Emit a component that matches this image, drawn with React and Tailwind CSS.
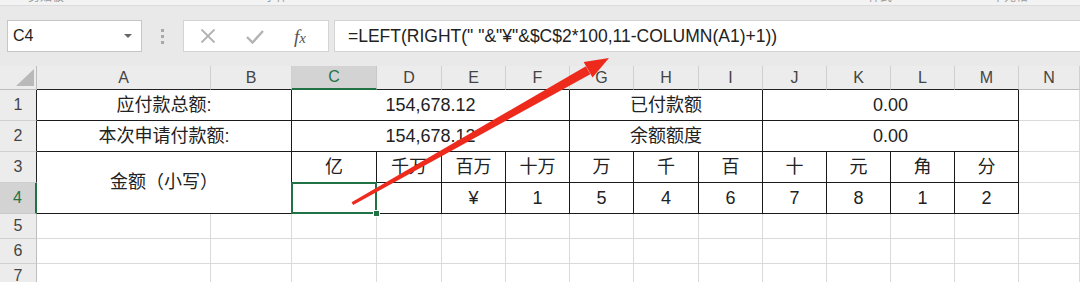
import React from "react";

const FONT = { fontFamily: '"Liberation Sans", "Noto Sans CJK SC", sans-serif' };

const cols = ["A", "B", "C", "D", "E", "F", "G", "H", "I", "J", "K", "L", "M", "N"];

function ColHeader({ c }) {
  if (c === "C") {
    return (
      <div className="flex items-center justify-center bg-[#d3d3d3] border-r border-[#c8c8c8] border-b-2 border-b-[#217346] text-[#217346] text-[16px]">
        C
      </div>
    );
  }
  const dark = c !== "N";
  return (
    <div
      className={
        "flex items-center justify-center bg-[#ececec] border-r border-[#d0d0d0] text-[#444] text-[16px] border-b " +
        (dark ? "border-b-[#222]" : "border-b-[#bdbdbd]")
      }
    >
      {c}
    </div>
  );
}

function RowHeader({ n, kind }) {
  if (kind === "sel") {
    return (
      <div className="flex items-center justify-center bg-[#d3d3d3] border-b border-[#c8c8c8] border-r-2 border-r-[#217346] text-[#217346] text-[16px]">
        {n}
      </div>
    );
  }
  return (
    <div
      className={
        "flex items-center justify-center bg-[#ececec] border-b border-[#d0d0d0] text-[#444] text-[16px] border-r " +
        (kind === "dark" ? "border-r-[#222]" : "border-r-[#bdbdbd]")
      }
    >
      {n}
    </div>
  );
}

function T({ children, className = "" }) {
  return (
    <div
      className={
        "flex items-center justify-center border-r border-b border-[#1a1a1a] text-[18px] text-[#222] " + className
      }
    >
      {children}
    </div>
  );
}

function G({ className = "" }) {
  return <div className={"border-r border-b border-[#dadada] bg-white " + className} />;
}

export default function App() {
  const labels = ["亿", "千万", "百万", "十万", "万", "千", "百", "十", "元", "角", "分"];
  const vals = ["", "", "¥", "1", "5", "4", "6", "7", "8", "1", "2"];
  return (
    <div className="relative w-[1080px] h-[282px] overflow-hidden bg-[#e9e9e9]" style={FONT}>
      {/* top ribbon remnant */}
      <div className="h-[6px] bg-[#f3f3f3] border-b border-[#dcdcdc] overflow-hidden relative">
        <div className="flex text-[12px] text-[#999] leading-none -mt-[9px]">
          <span className="ml-[28px]">剪贴板</span>
          <span className="ml-[200px]">字体</span>
          <span className="ml-[580px]">样式</span>
          <span className="ml-[100px]">单元格</span>
        </div>
      </div>
      {/* formula bar */}
      <div className="flex items-start pt-[14px] h-[60px] pl-[7px]">
        <div className="w-[135px] h-[32px] bg-white border border-[#c6c6c6] flex items-center justify-between px-[5px]">
          <span className="text-[16px] text-[#222]">C4</span>
          <svg width="8" height="5" viewBox="0 0 8 5" className="mr-[4px]">
            <path d="M0 0 L8 0 L4 4 Z" fill="#666" />
          </svg>
        </div>
        <div className="w-[41px] h-[32px] flex flex-col items-center justify-center gap-[3px]">
          <div className="w-[3px] h-[3px] bg-[#a8a8a8]" />
          <div className="w-[3px] h-[3px] bg-[#a8a8a8]" />
          <div className="w-[3px] h-[3px] bg-[#a8a8a8]" />
        </div>
        <div className="w-[146px] h-[32px] bg-white border border-[#d4d4d4] flex items-center">
          <svg width="16" height="16" viewBox="0 0 16 16" className="ml-[16px]">
            <path d="M1.5 1.5 L14.5 14.5 M14.5 1.5 L1.5 14.5" stroke="#b3b3b3" strokeWidth="1.8" />
          </svg>
          <svg width="18" height="15" viewBox="0 0 18 15" className="ml-[30px]">
            <path d="M1 8 L6.5 13.5 L17 2" stroke="#b3b3b3" strokeWidth="2.4" fill="none" />
          </svg>
          <span
            className="ml-[30px] text-[19px] italic text-[#555] leading-none"
            style={{ fontFamily: '"Liberation Serif", serif' }}
          >
            f<span className="text-[15px]">x</span>
          </span>
        </div>
        <div className="flex-1 h-[32px] bg-white border-y border-l border-[#d4d4d4] ml-[5px] flex items-center pl-[13px]">
          <span className="text-[17.5px] text-[#222] whitespace-pre">=LEFT(RIGHT(" "&"¥"&$C$2*100,11-COLUMN(A1)+1))</span>
        </div>
      </div>

      {/* grid */}
      <div className="grid grid-cols-[37px_174px_81px_85px_65px_64px_64px_64px_65px_64px_64px_64px_64px_64px_61px] grid-rows-[24px_31px_31px_31px_31px_25px_25px_25px] bg-white">
        {/* header row */}
        <div className="relative bg-[#ececec] border-r border-b border-[#bdbdbd]">
          <svg width="19" height="18" viewBox="0 0 19 18" className="absolute left-[16px] top-[3px]">
            <path d="M18 0 L18 17 L0 17 Z" fill="#b9b9b9" />
          </svg>
        </div>
        {cols.map((c) => (
          <ColHeader key={c} c={c} />
        ))}

        {/* row 1 */}
        <RowHeader n={1} kind="dark" />
        <T className="col-span-2">应付款总额:</T>
        <T className="col-span-4">154,678.12</T>
        <T className="col-span-3">已付款额</T>
        <T className="col-span-4">0.00</T>
        <G />

        {/* row 2 */}
        <RowHeader n={2} kind="dark" />
        <T className="col-span-2">本次申请付款额:</T>
        <T className="col-span-4">154,678.12</T>
        <T className="col-span-3">余额额度</T>
        <T className="col-span-4">0.00</T>
        <G />

        {/* row 3 */}
        <RowHeader n={3} kind="dark" />
        <T className="col-span-2 row-span-2">金额（小写）</T>
        {labels.map((l, i) => (
          <T key={"l" + i}>{l}</T>
        ))}
        <G />

        {/* row 4 */}
        <RowHeader n={4} kind="sel" />
        {vals.map((v, i) =>
          i === 0 ? (
            <div key="c4" className="relative border-r border-b border-[#1a1a1a]">
              <div className="absolute -left-[1px] -top-[1px] -right-[1px] -bottom-[1px] border-2 border-[#217346]" />
              <div className="absolute -right-[4px] -bottom-[4px] w-[7px] h-[7px] bg-[#217346] border border-white" />
            </div>
          ) : (
            <T key={"v" + i}>{v}</T>
          )
        )}
        <G />

        {/* rows 5-7 */}
        {[5, 6, 7].map((n) => (
          <React.Fragment key={n}>
            <RowHeader n={n} kind="norm" />
            {cols.map((c) => (
              <G key={c} />
            ))}
          </React.Fragment>
        ))}
      </div>

      {/* red arrow annotation */}
      <svg className="absolute left-0 top-0 pointer-events-none" width="1080" height="282" viewBox="0 0 1080 282">
        <polygon points="351.6,202.3 353.1,204.9 590.3,74.2 585.9,66.3" fill="#ee2a1c" />
        <polygon points="609,58 583.7,62 592.5,77.6" fill="#ee2a1c" />
      </svg>
    </div>
  );
}
